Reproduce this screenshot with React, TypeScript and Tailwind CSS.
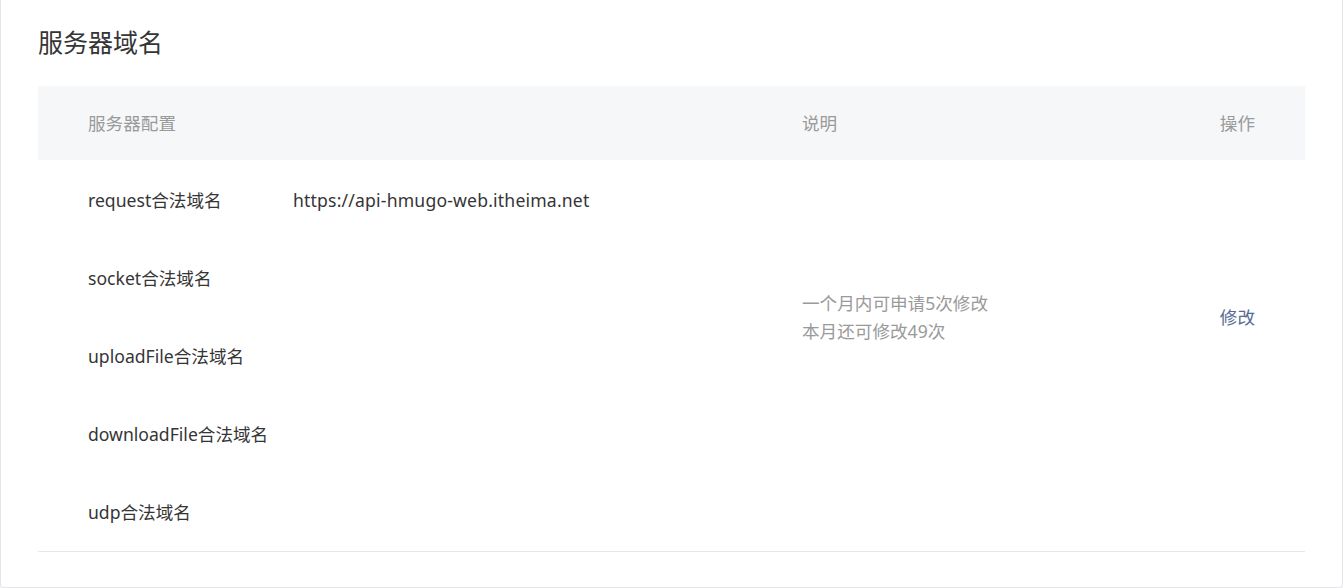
import React from "react";

const rows = [
  { label: "request合法域名", value: "https://api-hmugo-web.itheima.net" },
  { label: "socket合法域名", value: "" },
  { label: "uploadFile合法域名", value: "" },
  { label: "downloadFile合法域名", value: "" },
  { label: "udp合法域名", value: "" },
];

export default function App() {
  return (
    <div
      className="h-[588px] w-[1343px] bg-[#f6f8f9] text-[#353535]"
      style={{ fontFamily: '"Noto Sans", "Noto Sans CJK SC", sans-serif' }}
    >
      <div className="h-full border-x border-b border-[#e4e6ea] rounded-b-[4px] bg-white px-[37px]">
        {/* 标题 */}
        <h2 className="pt-[24px] h-[60px] text-[25px] leading-[36px] text-[#353535]">
          服务器域名
        </h2>

        {/* 表头 */}
        <div className="mt-[26px] grid grid-cols-[764px_1fr_auto] h-[74px] items-center bg-[#f6f7f9] text-[17.6px] text-[#9a9a9a]">
          <div className="pl-[50px]">服务器配置</div>
          <div>说明</div>
          <div className="pr-[50px] text-right">操作</div>
        </div>

        {/* 表体 */}
        <div className="pt-[1px] grid grid-cols-[764px_1fr_auto] grid-rows-[repeat(5,78px)] border-b border-[#e7e7eb] text-[17.6px]">
          {rows.map((r, i) => (
            <div
              key={r.label}
              className="col-start-1 flex items-center pl-[50px]"
              style={{ gridRowStart: i + 1 }}
            >
              <span className="w-[205px] shrink-0">{r.label}</span>
              <span className="tracking-[0.18px]">{r.value}</span>
            </div>
          ))}
          <div className="col-start-2 row-start-1 row-span-4 flex flex-col justify-center text-[#9a9a9a] leading-[28px]">
            <p>一个月内可申请5次修改</p>
            <p>本月还可修改49次</p>
          </div>
          <div className="col-start-3 row-start-1 row-span-4 flex items-center justify-end pr-[50px]">
            <a className="text-[#576b95] cursor-pointer">修改</a>
          </div>
        </div>
      </div>
    </div>
  );
}
